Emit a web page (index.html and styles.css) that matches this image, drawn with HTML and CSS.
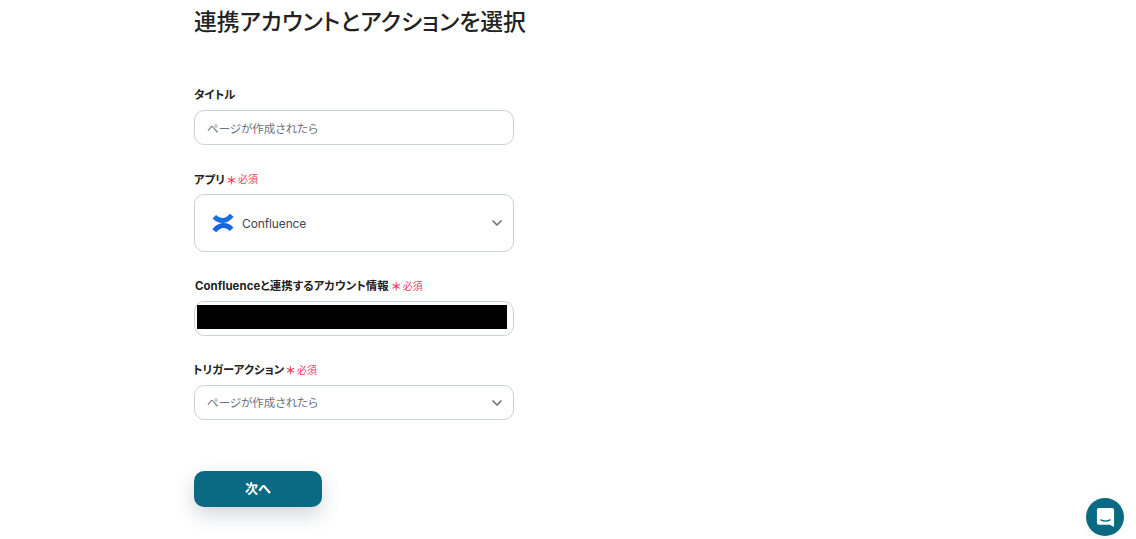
FILE: index.html
```html
<!DOCTYPE html>
<html lang="ja">
<head>
<meta charset="utf-8">
<title>連携アカウントとアクションを選択</title>
<link rel="stylesheet" href="styles.css">
</head>
<body>
<main class="page">
  <h1 class="heading">連携アカウントとアクションを選択</h1>
  <form class="form">
    <div class="field">
      <label class="label">タイトル</label>
      <div class="control">ページが作成されたら</div>
    </div>
    <div class="field">
      <label class="label label-app">アプリ<span class="req"><span class="star">＊</span>必須</span></label>
      <div class="control control-app">
        <svg class="logo" viewBox="0 0 24 24" width="22" height="22" aria-hidden="true">
          <path fill="none" stroke="#1a6fe8" stroke-width="5.400" d="M2.500 5.200C8 10.800 15.500 11 21.500 3.500"/>
          <path fill="none" stroke="#1565dc" stroke-width="5.400" d="M2.500 20.500C8.500 13 16 13.200 21.500 18.800"/>
        </svg>
        <span class="app-name">Confluence</span>
        <svg class="chev" viewBox="0 0 10 6" width="10" height="6" aria-hidden="true"><path d="M1 1l4 4 4-4" fill="none" stroke="#6b7280" stroke-width="1.700" stroke-linecap="round" stroke-linejoin="round"/></svg>
      </div>
    </div>
    <div class="field">
      <label class="label label-account">Confluenceと連携するアカウント情報<span class="req req-wide"><span class="star">＊</span>必須</span></label>
      <div class="control control-account"><div class="redacted"></div></div>
    </div>
    <div class="field field-trigger">
      <label class="label label-shift">トリガーアクション<span class="req"><span class="star">＊</span>必須</span></label>
      <div class="control control-select">
        <span class="select-text">ページが作成されたら</span>
        <svg class="chev" viewBox="0 0 10 6" width="10" height="6" aria-hidden="true"><path d="M1 1l4 4 4-4" fill="none" stroke="#6b7280" stroke-width="1.700" stroke-linecap="round" stroke-linejoin="round"/></svg>
      </div>
    </div>
    <button class="next" type="button">次へ</button>
  </form>
</main>
<div class="chat">
  <svg viewBox="0 0 20 22" width="19" height="21" aria-hidden="true">
    <path fill="#fff" d="M3 1h14a2 2 0 0 1 2 2v18l-4.500-2.500H3a2 2 0 0 1-2-2V3a2 2 0 0 1 2-2z"/>
    <path d="M5 13.500c3 1.500 7 1.500 10 0" fill="none" stroke="#0b6a83" stroke-width="1.200" stroke-linecap="round"/>
  </svg>
</div>
</body>
</html>
```
FILE: styles.css
```css
* { box-sizing: border-box; }
html, body { margin: 0; height: 100%; background: #fff; overflow: hidden; }
body {
  font-family: Inter, "Noto Sans CJK JP", sans-serif;
  font-feature-settings: "palt";
  color: #222;
}
.page { padding: 7px 0 0 194px; width: 560px; }
.heading {
  margin: 0;
  font-size: 22.800px;
  line-height: 30px;
  font-weight: 500;
  color: #222;
  white-space: nowrap;
}
.form { margin-top: 49px; width: 320px; }
.field { margin-bottom: 25px; }
.label {
  display: flex;
  align-items: center;
  height: 16px;
  margin-bottom: 8px;
  font-size: 11.400px;
  font-weight: 700;
  color: #222;
  white-space: nowrap;
}
.label-app { padding-top: 1px; }
.label-account { padding-left: 1px; letter-spacing: .006em; }
.label-shift { margin-left: -1px; }
.req {
  display: inline-flex;
  align-items: center;
  margin-left: 1px;
  font-size: 10px;
  font-weight: 400;
  letter-spacing: 0;
  color: #f0435f;
}
.req-wide { margin-left: 2px; }
.star {
  margin-right: 1px;
  font-size: 11px;
  font-weight: 700;
  font-feature-settings: normal;
  padding-top: 2px;
}
.control {
  display: flex;
  align-items: center;
  height: 35px;
  padding: 0 12px;
  border: 1px solid #cdd1da;
  border-radius: 10px;
  background: #fff;
  font-size: 11.500px;
  color: #6b7280;
}
.control-app { height: 58px; padding-left: 17px; padding-right: 11px; }
.control-account { align-items: flex-start; padding: 3px 6px 0 2px; }
.control-select { justify-content: space-between; padding-right: 11px; }
.select-text { padding-bottom: 1px; }
.logo { flex: none; }
.app-name { margin-left: 8px; flex: 1; font-size: 12px; letter-spacing: -.01em; color: #3e4654; }
.chev { flex: none; }
.redacted { width: 100%; height: 24px; background: #000; }
.next {
  display: block;
  width: 128px;
  height: 36px;
  margin-top: 51px;
  padding: 0 0 3px;
  border: 0;
  border-radius: 10px;
  background: #0b6a83;
  color: #fff;
  font: 700 13px Inter, "Noto Sans CJK JP", sans-serif;
  box-shadow: 0 8px 20px rgba(30, 50, 70, .2);
}
.field-trigger { margin-bottom: 0; }
.chat {
  position: fixed;
  left: 1086px;
  top: 498px;
  width: 38px;
  height: 38px;
  border-radius: 50%;
  background: #0b6a83;
  display: flex;
  align-items: center;
  justify-content: center;
  box-shadow: 0 1px 6px rgba(0, 0, 0, .08);
}
```
